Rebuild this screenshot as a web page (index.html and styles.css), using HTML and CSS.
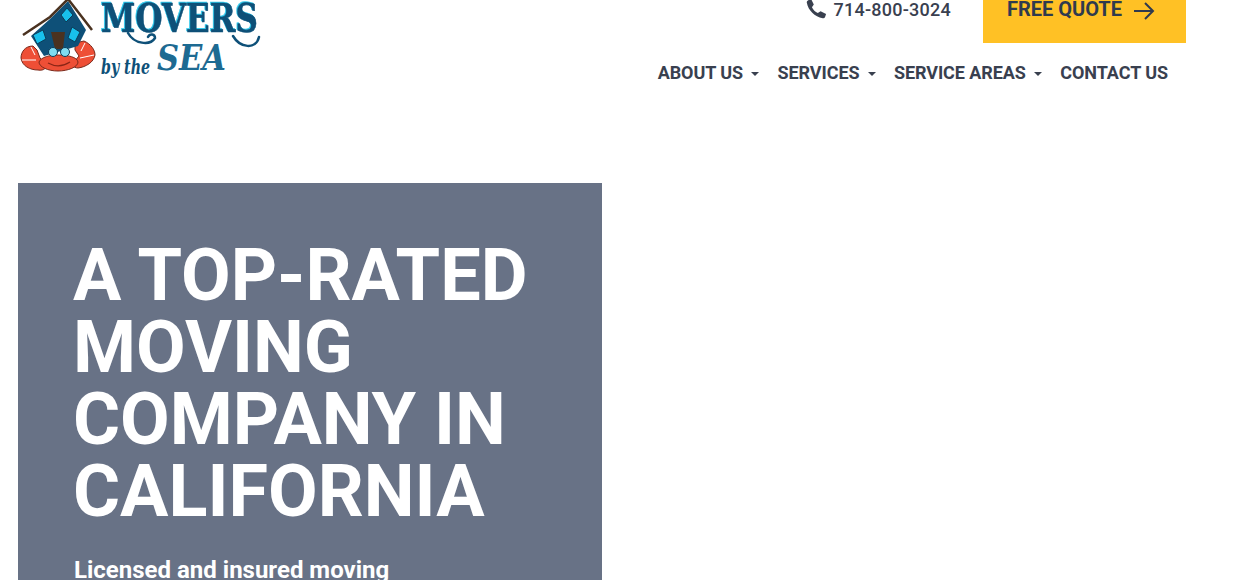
FILE: index.html
```html
<!DOCTYPE html>
<html lang="en">
<head>
    <meta charset="UTF-8">
    <meta name="viewport" content="width=device-width, initial-scale=1.0">
    <title>Movers by the Sea</title>
    <link rel="stylesheet" href="styles.css">
</head>
<body>

<header class="header">
    <a class="logo" href="#">
        <svg width="245" height="90" viewBox="20 0 245 90" role="img" aria-label="Movers by the Sea">
            <!-- crab claws -->
            <path d="M33 46 C25 46 21 52 21 58 C22 66 30 70 38 70 C44 71 47 68 46 64 L40 58 L37 50 Z" fill="#ee4f36" stroke="#7a2a1c"/>
            <path d="M75 43 L84 41 C91 44 95 50 95 55 C94 62 86 67 78 68 C73 68 72 64 74 62 L79 56 L75 50 Z" fill="#ee4f36" stroke="#7a2a1c"/>
            <path d="M31 47 L35 55 M22 60 L36 60 M85 43 L81 51 M94 55 L80 58" fill="none" stroke="#fff" stroke-width="1"/>
            <!-- house -->
            <path d="M31 36 L50 19 L68 1 L86 30 L78 46 L44 56 Z" fill="#0e5078"/>
            <path d="M23 35 L50 17 L68 -1 L92 30" fill="none" stroke="#4a3220" stroke-width="2.5"/>
            <path d="M67 8 L73 15 L66 22 L61 15 Z" fill="#18c0ec" stroke="#0b3c58"/>
            <path d="M33 35 L43 30 L46 39 L37 44 Z" fill="#18c0ec" stroke="#0b3c58"/>
            <path d="M72 27 L80 32 L75 42 L68 38 Z" fill="#18c0ec" stroke="#0b3c58"/>
            <path d="M51 32 L65 32 L63 49 L55 49 Z" fill="#4a3220"/>
            <!-- crab body -->
            <path d="M39 62 C41 57 50 55 58 55 C68 55 77 57 78 62 C78 67 68 71 58 71 C48 71 39 67 39 62 Z" fill="#ee4f36" stroke="#7a2a1c"/>
            <path d="M48 63 Q59 69 70 62" fill="none" stroke="#8a2516" stroke-width="1.2"/>
            <circle cx="53" cy="52" r="4.5" fill="#7fdcf2" stroke="#0b3c58"/>
            <circle cx="65" cy="52" r="4.5" fill="#7fdcf2" stroke="#0b3c58"/>
            <!-- wordmark -->
            <text class="logo-movers" x="101" y="32" textLength="157" lengthAdjust="spacingAndGlyphs">MOVERS</text>
            <path class="logo-swash" d="M128 33 C134 44 150 46 155 38 C155 34 150 33 148 37 M233 36 C240 48 256 50 259 37"/>
            <text class="logo-by" x="101" y="74" textLength="49" lengthAdjust="spacingAndGlyphs">by the</text>
            <text class="logo-sea" x="157" y="70" textLength="69" lengthAdjust="spacingAndGlyphs">SEA</text>
        </svg>
    </a>

    <div class="header-right">
        <div class="top-row">
            <a class="phone" href="#">
                <svg width="22" height="22" viewBox="0 0 24 24"><path d="M6.6 1 L9.6 7 L7.6 10 C8.8 12.8 11.2 15.2 14 16.4 L17 14.4 L23 17.4 L21.9 20.8 C21.4 21.9 20.4 22.3 19.3 22 C10.6 20.6 3.4 13.4 2 5.2 C1.7 4.1 2.1 3.1 3.2 2.6 Z" fill="#39404f"/></svg>
                714-800-3024
            </a>
            <a class="quote-btn" href="#">
                FREE QUOTE
                <svg class="arrow" width="22" height="20" viewBox="0 0 22 20"><path d="M1 10 H20 M12 2 L20 10 L12 18" fill="none" stroke="#2f3a4e" stroke-width="2"/></svg>
            </a>
        </div>
        <nav class="nav">
            <a href="#">ABOUT US <span class="caret"></span></a>
            <a href="#">SERVICES <span class="caret"></span></a>
            <a href="#">SERVICE AREAS <span class="caret"></span></a>
            <a href="#">CONTACT US</a>
        </nav>
    </div>
</header>

<section class="hero">
    <div class="hero-box">
        <h1>A TOP-RATED MOVING COMPANY IN CALIFORNIA</h1>
        <p>Licensed and insured moving</p>
    </div>
</section>

</body>
</html>
```
FILE: styles.css
```css
html, body {
    height: 100%;
    overflow: hidden;
}

body {
    font-family: Roboto, 'Liberation Sans', Arial, sans-serif;
    background-color: #fff;
    color: #39404f;
    margin: 0;
    padding: 0;
}

a {
    color: inherit;
    text-decoration: none;
}

.header {
    display: flex;
    justify-content: space-between;
    align-items: flex-start;
    height: 183px;
    padding: 0 56px 0 20px;
    box-sizing: border-box;
}

.logo svg {
    display: block;
    overflow: visible;
}

.logo-movers {
    font-family: 'DejaVu Serif', serif;
    font-weight: bold;
    font-size: 40px;
    fill: #0e5078;
    stroke: #0e5078;
    stroke-width: 0.6px;
    filter: drop-shadow(-1px -1px 0 #2cc6ea);
}

.logo-swash {
    fill: none;
    stroke: #0e5078;
    stroke-width: 2.5px;
    stroke-linecap: round;
}

.logo-by {
    font-family: 'DejaVu Serif', serif;
    font-weight: bold;
    font-style: italic;
    font-size: 21px;
    fill: #0e5078;
}

.logo-sea {
    font-family: 'DejaVu Serif', serif;
    font-style: italic;
    font-weight: bold;
    font-size: 36px;
    fill: #1d6a92;
}

.header-right {
    display: flex;
    flex-direction: column;
    align-items: flex-end;
}

.top-row {
    display: flex;
    align-items: flex-start;
    gap: 32px;
}

.phone {
    display: flex;
    align-items: center;
    gap: 6px;
    height: 18px;
    font-size: 18px;
    font-weight: 500;
    letter-spacing: 0.25px;
}

.quote-btn {
    display: flex;
    align-items: flex-start;
    gap: 11px;
    width: 203px;
    height: 43px;
    box-sizing: border-box;
    padding: 0 24px;
    background-color: #ffc125;
    font-size: 20px;
    font-weight: 700;
    line-height: 19px;
    color: #2f3a4e;
}

.arrow {
    margin-top: 1px;
}

.nav {
    display: flex;
    gap: 18px;
    margin-top: 19px;
    padding-right: 18px;
    font-size: 18px;
    font-weight: 700;
    line-height: 22px;
    letter-spacing: -0.07px;
}

.caret {
    display: inline-block;
    width: 0;
    height: 0;
    margin-left: 4px;
    vertical-align: middle;
    border-top: 4px solid #39404f;
    border-left: 4px solid transparent;
    border-right: 4px solid transparent;
}

.hero {
    padding-left: 18px;
}

.hero-box {
    width: 584px;
    height: 500px;
    box-sizing: border-box;
    padding: 57px 55px 0;
    background-color: #687286;
    color: #fff;
}

.hero-box h1 {
    margin: 0;
    font-size: 72px;
    font-weight: 700;
    line-height: 72px;
}

.hero-box p {
    margin: 27px 0 0 1px;
    font-size: 24px;
    font-weight: 700;
    line-height: 30px;
}
```
